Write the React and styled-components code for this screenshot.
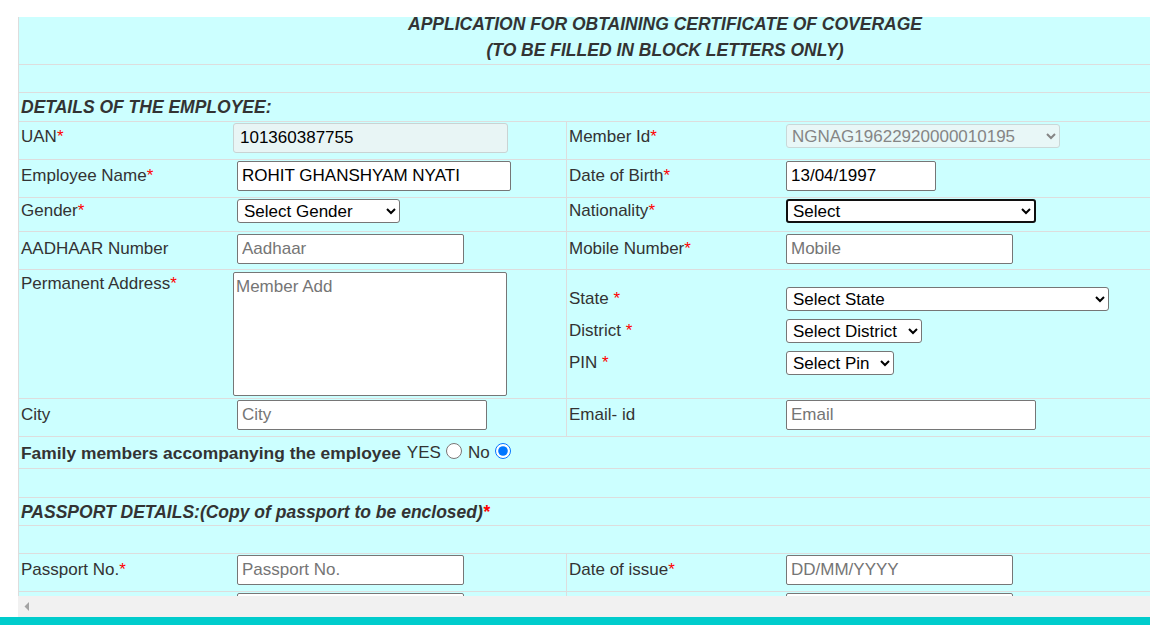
import React from "react";
import styled, { createGlobalStyle } from "styled-components";

const Global = createGlobalStyle`
  html, body { margin: 0; padding: 0; background: #fff; }
  body { font-family: "Liberation Sans", Arial, sans-serif; }
  * { box-sizing: border-box; }
`;

const FONT = `"Liberation Sans", Arial, Helvetica, sans-serif`;

const Page = styled.div`
  height: 625px;
  display: flex;
  flex-direction: column;
  overflow: hidden;
  background: #fff;
`;

const Viewport = styled.div`
  flex: 1;
  min-height: 0;
  margin-left: 18px;
  padding-top: 17px;
  overflow: hidden;
`;

const Panel = styled.div`
  width: 1293px;
  border-left: 1px solid #ddd;
  background: #ccffff;
  color: #333;
  font-family: ${FONT};
  font-size: 17px;
  line-height: 20px;
`;

const Band = styled.div`
  box-sizing: content-box;
  height: ${(p) => p.$h}px;
  border-bottom: 1px solid #ddd;
  display: flex;
  align-items: center;
  padding-left: 2px;
`;

const TitleBand = styled.div`
  box-sizing: content-box;
  display: flow-root;
  height: 47px;
  border-bottom: 1px solid #ddd;
  text-align: center;
  font-weight: bold;
  font-style: italic;
  font-size: 17.5px;
  line-height: 26px;
`;

const TitleText = styled.div`
  margin-top: -6px;
`;

const SectionHead = styled.span`
  font-weight: bold;
  font-style: italic;
  font-size: 17.5px;
`;

const Req = styled.span`
  color: #f00;
`;

const Strong = styled.span`
  font-weight: bold;
  font-size: 17.4px;
  margin-right: 6px;
`;

const Radio = styled.input.attrs({ type: "radio" })`
  width: 16px;
  height: 16px;
  margin: 0 6px 4px 5px;
  vertical-align: middle;
  accent-color: #0075ff;
`;

const Label = styled.div`
  padding-left: 2px;
  line-height: 20px;
  white-space: nowrap;
  ${(p) => p.$divider && "border-left: 1px solid #ddd;"}
`;

const FieldCell = styled.div`
  padding-left: ${(p) => (p.$right ? 0 : 2)}px;
`;

const Row = styled.div`
  box-sizing: content-box;
  display: grid;
  grid-template-columns: 212px 335px 216px 1fr;
  height: ${(p) => p.$h ?? 37}px;
  border-bottom: 1px solid #ddd;
  & > ${Label} {
    padding-top: ${(p) => p.$lt ?? 6}px;
  }
  & > ${FieldCell} {
    padding-top: ${(p) => p.$ft ?? 1}px;
  }
`;

const TextInput = styled.input`
  display: block;
  width: ${(p) => p.$w}px;
  height: 30px;
  margin-left: ${(p) => (p.$flush ? 0 : 4)}px;
  padding: 0 4px;
  border: 1px solid #767676;
  border-radius: 2px;
  background: #fff;
  color: #000;
  font-family: ${FONT};
  font-size: 17px;
  outline: none;
  &::placeholder {
    color: #757575;
  }
`;

const ReadOnlyInput = styled(TextInput)`
  padding-left: 6px;
  background: #e8f5f5;
  border-color: #c9d3d3;
  border-radius: 3px;
`;

const TextArea = styled.textarea`
  display: block;
  width: 274px;
  height: 124px;
  margin: 0;
  padding: 4px 2px;
  border: 1px solid #767676;
  border-radius: 2px;
  resize: none;
  background: #fff;
  color: #000;
  font-family: ${FONT};
  font-size: 17px;
  line-height: 20px;
  outline: none;
  &::placeholder {
    color: #757575;
  }
`;

const Select = styled.select`
  display: block;
  width: ${(p) => p.$w}px;
  height: 24px;
  margin-left: 4px;
  padding: 0 0 0 2px;
  border: 1px solid #767676;
  border-radius: 3px;
  background: #fff;
  color: #000;
  font-family: ${FONT};
  font-size: 17px;
  outline: none;
`;

const FocusSelect = styled(Select)`
  border: 2px solid #101010;
  padding-left: 1px;
`;

const DisabledSelect = styled(Select)`
  margin-top: 1px;
  padding-left: 1px;
  background: #e8f7f7;
  border-color: #c9d8d8;
  color: #858585;
  opacity: 1;
`;

const AddressGroup = styled.div`
  grid-column: 3 / 5;
  border-left: 1px solid #ddd;
  display: grid;
  grid-template-columns: 215px 1fr;
  grid-auto-rows: 32px;
  align-items: center;
  align-content: start;
  padding-top: 13px;
`;

const GroupLabel = styled.div`
  padding-left: 2px;
`;

const HScroll = styled.div`
  flex: none;
  height: 21px;
  margin-left: 18px;
  background: #f1f1f1;
  display: flex;
  align-items: center;
  padding-left: 6px;
`;

const Teal = styled.div`
  flex: none;
  height: 8px;
  background: #00cccc;
`;

const L = ({ children, req, divider }) => (
  <Label $divider={divider}>
    {children}
    {req && <Req>*</Req>}
  </Label>
);

export default function App() {
  return (
    <>
      <Global />
      <Page>
        <Viewport>
          <Panel>
            <TitleBand>
              <TitleText>
                APPLICATION FOR OBTAINING CERTIFICATE OF COVERAGE
                <br />
                (TO BE FILLED IN BLOCK LETTERS ONLY)
              </TitleText>
            </TitleBand>
            <Band $h={27} />
            <Band $h={28}>
              <SectionHead>DETAILS OF THE EMPLOYEE:</SectionHead>
            </Band>

            <Row $lt={5}>
              <L req>UAN</L>
              <FieldCell>
                <ReadOnlyInput $flush $w={275} readOnly defaultValue="101360387755" />
              </FieldCell>
              <L req divider>Member Id</L>
              <FieldCell $right>
                <DisabledSelect $w={274} disabled>
                  <option>NGNAG19622920000010195</option>
                </DisabledSelect>
              </FieldCell>
            </Row>

            <Row>
              <L req>Employee Name</L>
              <FieldCell>
                <TextInput $w={274} defaultValue="ROHIT GHANSHYAM NYATI" />
              </FieldCell>
              <L req divider>Date of Birth</L>
              <FieldCell $right>
                <TextInput $w={150} defaultValue="13/04/1997" />
              </FieldCell>
            </Row>

            <Row $h={33} $lt={3}>
              <L req>Gender</L>
              <FieldCell>
                <Select $w={163}>
                  <option>Select Gender</option>
                </Select>
              </FieldCell>
              <L req divider>Nationality</L>
              <FieldCell $right>
                <FocusSelect $w={250}>
                  <option>Select</option>
                </FocusSelect>
              </FieldCell>
            </Row>

            <Row $lt={7} $ft={2}>
              <L>AADHAAR Number</L>
              <FieldCell>
                <TextInput $w={227} placeholder="Aadhaar" />
              </FieldCell>
              <L req divider>Mobile Number</L>
              <FieldCell $right>
                <TextInput $w={227} placeholder="Mobile" />
              </FieldCell>
            </Row>

            <Row $h={128} $lt={4} $ft={2}>
              <L req>Permanent Address</L>
              <FieldCell>
                <TextArea placeholder="Member Add" />
              </FieldCell>
              <AddressGroup>
                <GroupLabel>
                  State <Req>*</Req>
                </GroupLabel>
                <Select $w={323}>
                  <option>Select State</option>
                </Select>
                <GroupLabel>
                  District <Req>*</Req>
                </GroupLabel>
                <Select $w={136}>
                  <option>Select District</option>
                </Select>
                <GroupLabel>
                  PIN <Req>*</Req>
                </GroupLabel>
                <Select $w={108}>
                  <option>Select Pin</option>
                </Select>
              </AddressGroup>
            </Row>

            <Row>
              <L>City</L>
              <FieldCell>
                <TextInput $w={250} placeholder="City" />
              </FieldCell>
              <L divider>Email- id</L>
              <FieldCell $right>
                <TextInput $w={250} placeholder="Email" />
              </FieldCell>
            </Row>

            <Band $h={31}>
              <Strong>Family members accompanying the employee</Strong>
              YES
              <Radio name="family" />
              No
              <Radio name="family" defaultChecked />
            </Band>

            <Band $h={28} />
            <Band $h={27}>
              <SectionHead>
                PASSPORT DETAILS:(Copy of passport to be enclosed)
                <Req>*</Req>
              </SectionHead>
            </Band>
            <Band $h={27} />

            <Row>
              <L req>Passport No.</L>
              <FieldCell>
                <TextInput $w={227} placeholder="Passport No." />
              </FieldCell>
              <L req divider>Date of issue</L>
              <FieldCell $right>
                <TextInput $w={227} placeholder="DD/MM/YYYY" />
              </FieldCell>
            </Row>

            <Row>
              <Label />
              <FieldCell>
                <TextInput $w={227} aria-label="Place of issue" />
              </FieldCell>
              <Label $divider />
              <FieldCell $right>
                <TextInput $w={227} aria-label="Valid upto" />
              </FieldCell>
            </Row>
          </Panel>
        </Viewport>
        <HScroll>
          <svg width="6" height="9" viewBox="0 0 6 9">
            <polygon points="5,0 5,9 0.5,4.5" fill="#a3a3a3" />
          </svg>
        </HScroll>
        <Teal />
      </Page>
    </>
  );
}
